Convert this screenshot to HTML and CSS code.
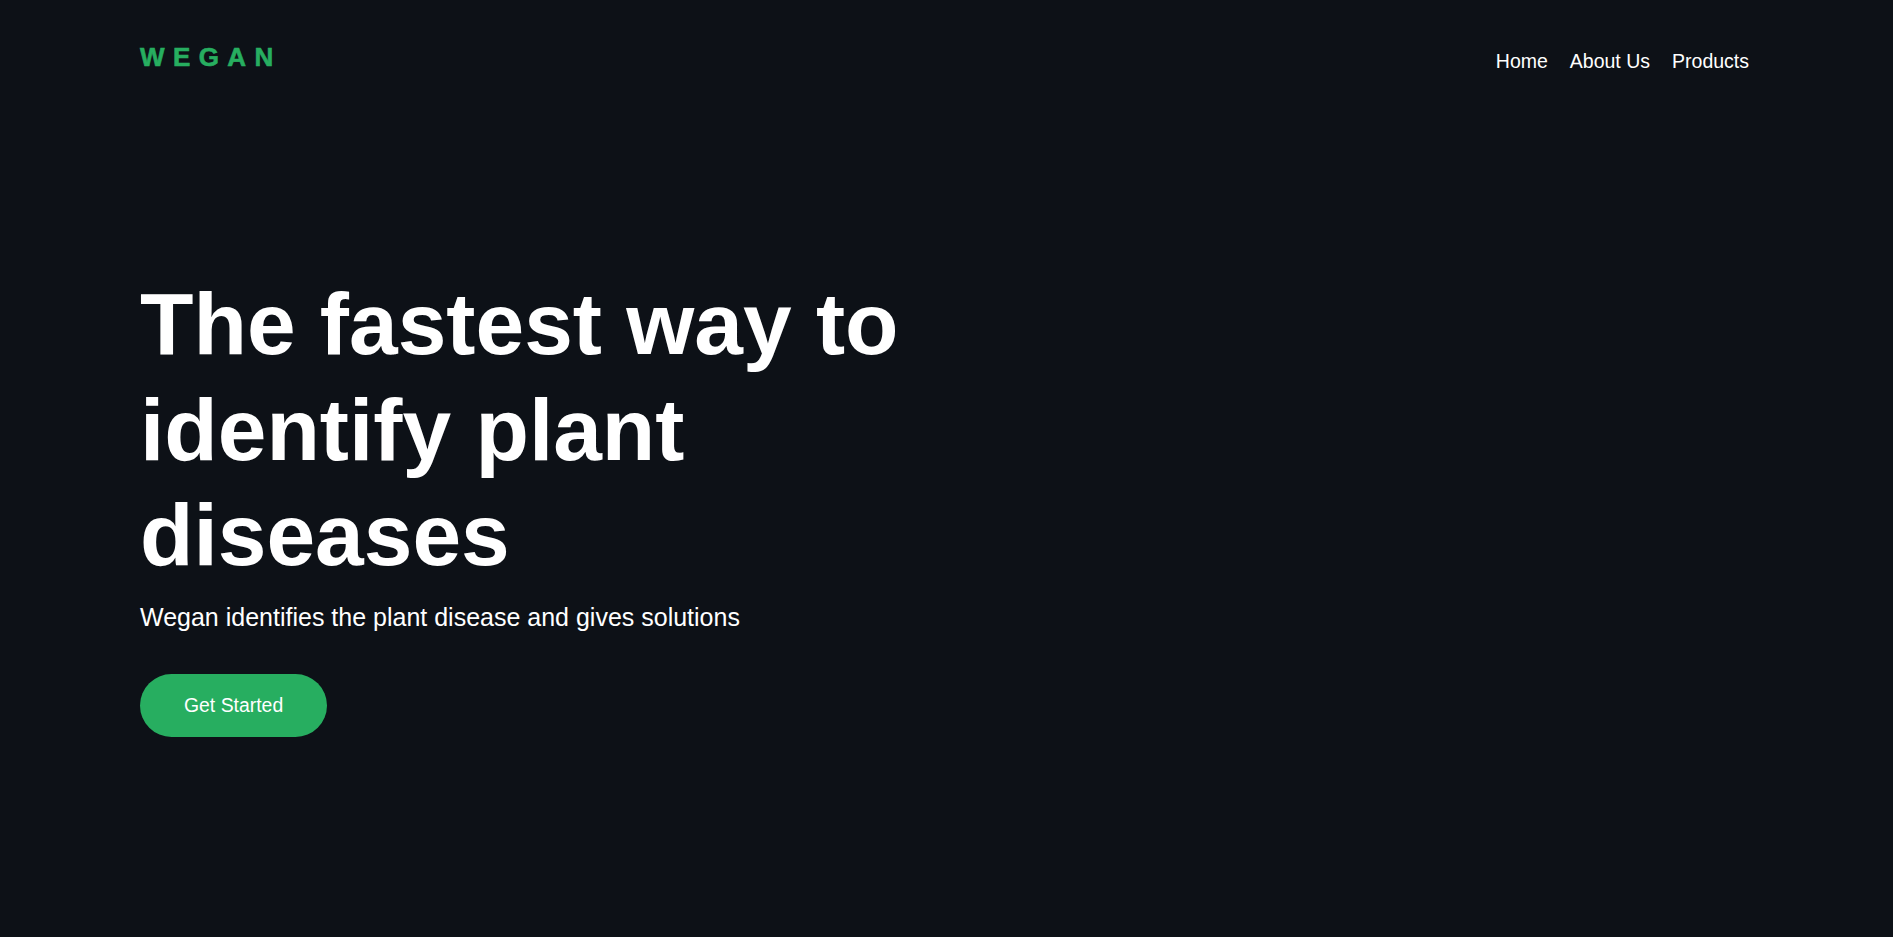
FILE: index.html
```html
<!DOCTYPE html>
<html lang="en">
<head>
<meta charset="utf-8">
<title>Wegan</title>
<link rel="stylesheet" href="styles.css">
</head>
<body>
<header class="header">
  <div class="logo">WEGAN</div>
  <nav class="nav">
    <a href="#" class="nav-link">Home</a>
    <a href="#" class="nav-link">About Us</a>
    <a href="#" class="nav-link">Products</a>
  </nav>
</header>
<main class="hero">
  <h1 class="hero-title">The fastest way to identify plant diseases</h1>
  <p class="hero-text">Wegan identifies the plant disease and gives solutions</p>
  <a href="#" class="btn">Get Started</a>
</main>
</body>
</html>
```
FILE: styles.css
```css
html, body {
  margin: 0;
  padding: 0;
  height: 100%;
}
body {
  background: #0d1117;
  color: #ffffff;
  font-family: "Liberation Sans", Arial, sans-serif;
  overflow: hidden;
}
.header {
  display: flex;
  justify-content: space-between;
  align-items: flex-start;
  padding: 42px 144px 0 140px;
}
.logo {
  font-size: 26px;
  font-weight: 700;
  letter-spacing: 8.4px;
  color: #27ae60;
  -webkit-text-stroke: 0.6px #27ae60;
}
.nav {
  display: flex;
  gap: 22px;
  margin-top: 7.5px;
}
.nav-link {
  color: #ffffff;
  text-decoration: none;
  font-size: 19.5px;
}
.hero {
  padding: 199px 140px 0 140px;
}
.hero-title {
  margin: 0;
  max-width: 800px;
  font-size: 87.5px;
  line-height: 105.5px;
  font-weight: 700;
}
.hero-text {
  margin: 14px 0 0 0;
  font-size: 25px;
}
.btn {
  display: inline-block;
  margin-top: 42px;
  padding: 20px 44px;
  background: #27ae60;
  color: #ffffff;
  text-decoration: none;
  font-size: 19.4px;
  border-radius: 40px;
}
```
